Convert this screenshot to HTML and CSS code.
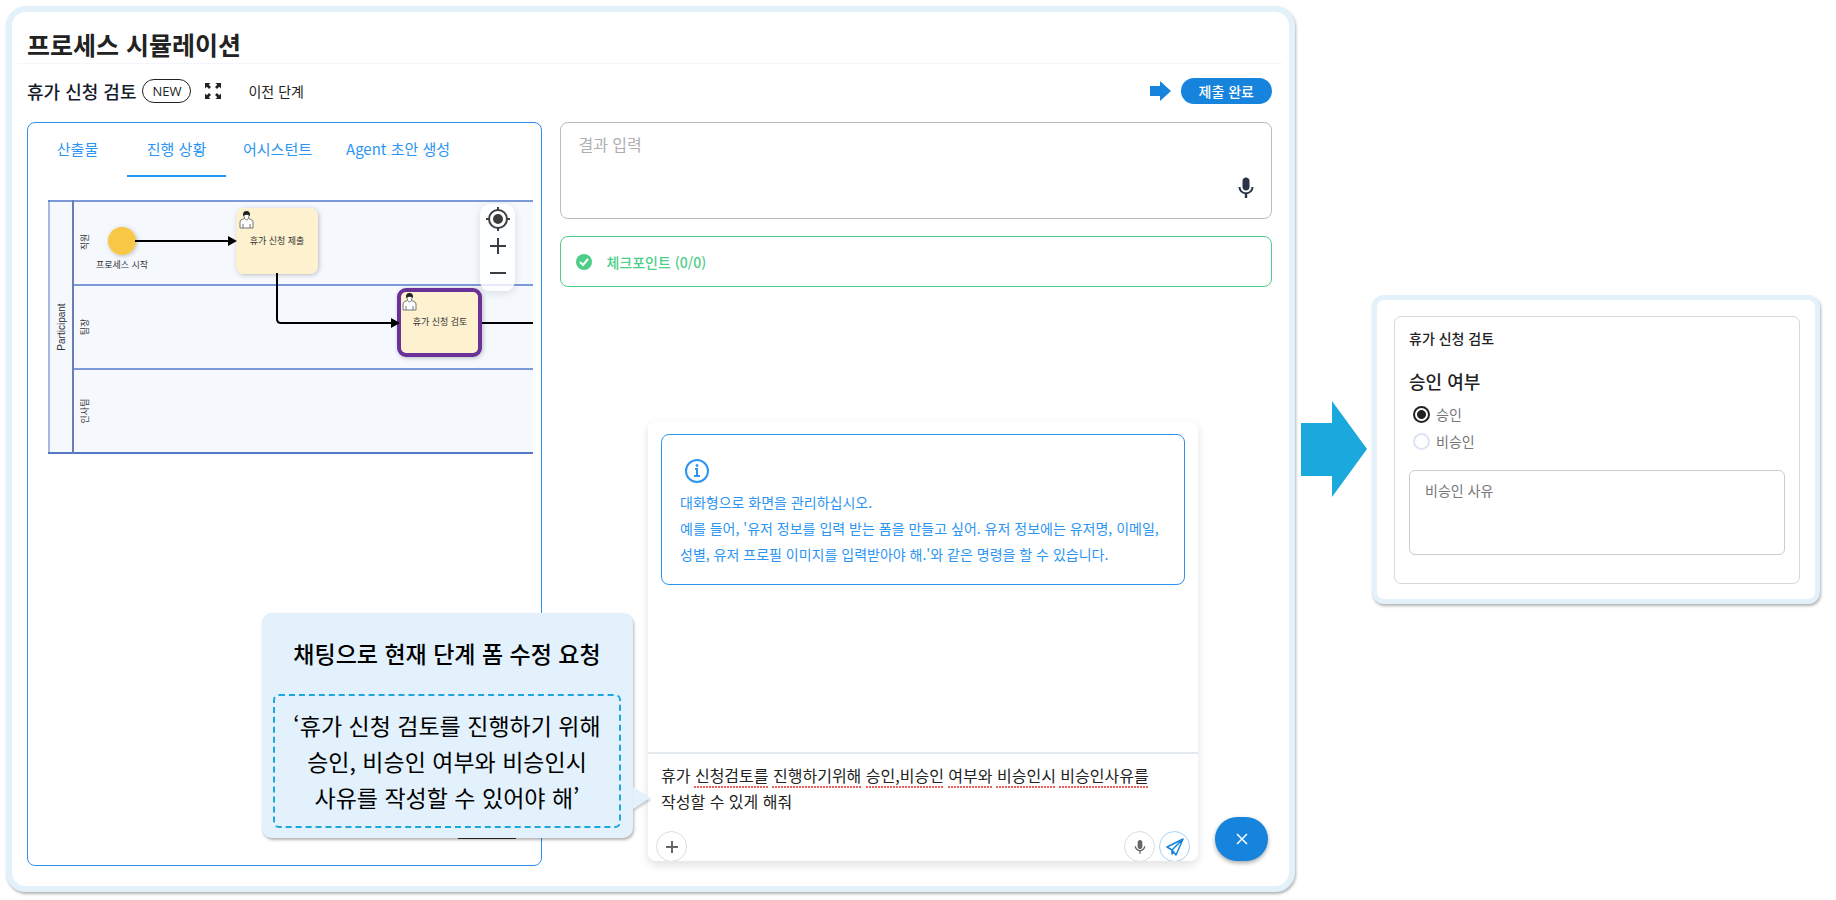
FILE: index.html
```html
<!DOCTYPE html>
<html lang="ko">
<head>
  <meta charset="utf-8">
  <meta name="viewport" content="width=device-width, initial-scale=1.0">
  <title>프로세스 시뮬레이션</title>
  <link rel="stylesheet" href="styles.css">
</head>
<body>
<main class="frame simulation">
  <h1 class="page-title">프로세스 시뮬레이션</h1>

  <header class="task-bar">
    <h2 class="task-name">휴가 신청 검토</h2>
    <span class="chip">NEW</span>
    <button type="button" class="icon-btn expand-btn" aria-label="전체 화면">
      <svg width="18" height="18" viewBox="0 0 18 18">
        <g fill="#222">
          <path d="M1 1h5.500L4.700 2.800 7 5 5 7 2.800 4.700 1 6.500z"/>
          <path d="M17 1v5.500l-1.800-1.800L13 7l-2-2 2.300-2.200L11.500 1z"/>
          <path d="M1 17v-5.500l1.800 1.800L5 11l2 2-2.300 2.200L6.500 17z"/>
          <path d="M17 17h-5.500l1.800-1.800L11 13l2-2 2.200 2.300 1.800-1.800z"/>
        </g>
      </svg>
    </button>
    <button type="button" class="text-btn">이전 단계</button>
    <svg class="hint-arrow" width="21" height="20" viewBox="0 0 21 20"><path d="M0 5h10V0l11 10-11 10v-5H0z" fill="#1683dc"/></svg>
    <button type="button" class="submit-btn">제출 완료</button>
  </header>

  <div class="columns">
    <section class="panel">
      <nav class="tabs">
        <a href="#output">산출물</a>
        <a href="#progress" class="active">진행 상황</a>
        <a href="#assistant">어시스턴트</a>
        <a href="#draft">Agent 초안 생성</a>
      </nav>
      <div class="diagram">
        <svg class="bpmn" width="100%" height="256">
          <defs>
            <filter id="soft" x="-20%" y="-20%" width="140%" height="150%">
              <feDropShadow dx="1" dy="1" stdDeviation="2" flood-color="#000" flood-opacity="0.25"/>
            </filter>
            <g id="user-icon">
              <path d="M1 17v-6q0-2 2-2.500L5.500 7.500h4L12 8.500q2 .5 2 2.500v6z" fill="#fff" stroke="#777" stroke-width="1"/>
              <path d="M4 17v-4M11 17v-4" stroke="#777" stroke-width="1"/>
              <path d="M5 3.500q0 5 2.500 5.500Q10 8.500 10 3.500z" fill="#fff" stroke="#777" stroke-width="1"/>
              <path d="M4 5q-.5-5 3.500-5T11 5Q9 3 7.500 3.500 5 4 4 5z" fill="#222"/>
            </g>
          </defs>
          <!-- pool and lanes -->
          <rect x="0" y="0" width="100%" height="254" fill="#f5f9fe"/>
          <g stroke="#7d9ad8" stroke-width="2">
            <line x1="0" y1="1" x2="100%" y2="1"/>
            <line x1="25" y1="85" x2="100%" y2="85"/>
            <line x1="25" y1="169" x2="100%" y2="169"/>
          </g>
          <g stroke="#5478c6">
            <line x1="0" y1="253" x2="100%" y2="253" stroke-width="2"/>
            <line x1="1" y1="0" x2="1" y2="254" stroke-width="1"/>
            <line x1="25" y1="0" x2="25" y2="254" stroke-width="2" stroke="#6b7eb3"/>
          </g>
          <!-- flows -->
          <g fill="none" stroke="#000" stroke-width="2">
            <path d="M88 41h94"/>
            <path d="M229 74v45q0 4 4 4h112"/>
            <line x1="434" y1="123" x2="100%" y2="123"/>
          </g>
          <!-- nodes -->
          <circle cx="74" cy="41" r="14" fill="#f7c744" filter="url(#soft)"/>
          <path d="M87 41h8" stroke="#000" stroke-width="2"/>
          <rect x="188" y="8" width="82" height="66" rx="8" fill="#fdf1d0" filter="url(#soft)"/>
          <path d="M229 73v6" stroke="#000" stroke-width="2"/>
          <rect x="351" y="90" width="81" height="65" rx="7" fill="#fdf1d0" stroke="#6a3199" stroke-width="4" filter="url(#soft)"/>
          <path d="M180 36l9 5-9 5zM343 118l9 5-9 5z"/>
          <use href="#user-icon" x="191" y="11"/>
          <use href="#user-icon" x="354" y="93"/>
          <g class="node-text">
            <text x="229" y="44">휴가 신청 제출</text>
            <text x="392" y="125">휴가 신청 검토</text>
            <text x="74" y="68">프로세스 시작</text>
            <text class="participant" transform="translate(17 127) rotate(-90)">Participant</text>
            <text transform="translate(40 42) rotate(-90)">직원</text>
            <text transform="translate(40 127) rotate(-90)">팀장</text>
            <text transform="translate(40 211) rotate(-90)">인사팀</text>
          </g>
        </svg>
        <div class="zoom-tools">
          <button type="button" class="icon-btn" aria-label="가운데 맞춤">
            <svg width="26" height="26" viewBox="0 0 26 26" fill="none" stroke="#3d3d3d" stroke-width="2">
              <circle cx="13" cy="13" r="9"/><circle cx="13" cy="13" r="4" fill="#3d3d3d"/>
              <path d="M13 1v4M13 21v4M1 13h4M21 13h4"/>
            </svg>
          </button>
          <button type="button" class="icon-btn" aria-label="확대">
            <svg width="26" height="26" viewBox="0 0 26 26" stroke="#3d3d3d" stroke-width="2"><path d="M13 5v16M5 13h16"/></svg>
          </button>
          <button type="button" class="icon-btn" aria-label="축소">
            <svg width="26" height="26" viewBox="0 0 26 26" stroke="#3d3d3d" stroke-width="2"><path d="M5 13h16"/></svg>
          </button>
        </div>
      </div>
    </section>

    <section class="work">
      <div class="result-box">
        <textarea class="result-input" aria-label="결과 입력" placeholder="결과 입력"></textarea>
        <button type="button" class="icon-btn" aria-label="음성 입력">
          <svg width="24" height="24" viewBox="0 0 24 24" fill="#2a3547"><path d="M12 14.500c2 0 3.500-1.500 3.500-3.500V5C15.500 3 14 1.500 12 1.500S8.500 3 8.500 5v6c0 2 1.500 3.500 3.500 3.500zm5.500-3.500c0 3-2.500 5.300-5.500 5.300S6.500 14 6.500 11h-2c0 3.600 2.800 6.500 6.300 7.100V22h2.400v-3.900c3.500-.6 6.300-3.500 6.300-7.100h-2z"/></svg>
        </button>
      </div>
      <div class="checkpoint">
        <svg width="16" height="16" viewBox="0 0 16 16"><circle cx="8" cy="8" r="8" fill="#4cce88"/><path d="M4 8l3 3 5-6" fill="none" stroke="#fff" stroke-width="2"/></svg>
        <span>체크포인트 (0/0)</span>
      </div>
    </section>
  </div>

  <section class="chat">
    <div class="alert">
      <svg width="24" height="24" viewBox="0 0 24 24" fill="none" stroke="#2c95f2" stroke-width="2">
        <circle cx="12" cy="12" r="11"/>
        <path d="M10 10h2v7M9 17h6"/><circle cx="12" cy="6.500" r="1" fill="#2c95f2" stroke-width="1"/>
      </svg>
      <p>대화형으로 화면을 관리하십시오.<br>예를 들어, '유저 정보를 입력 받는 폼을 만들고 싶어. 유저 정보에는 유저명, 이메일,<br>성별, 유저 프로필 이미지를 입력받아야 해.'와 같은 명령을 할 수 있습니다.</p>
    </div>
    <form class="composer">
      <textarea class="message" aria-label="메시지" rows="2" spellcheck="false">휴가 신청검토를 진행하기위해 승인,비승인 여부와 비승인시 비승인사유를
작성할 수 있게 해줘</textarea>
      <svg class="spelling" width="100%" height="2">
        <path d="M33 1h75M111 1h90M205 1h78M287 1h44M335 1h59M398 1h89" stroke="#f0605c" stroke-width="2" stroke-dasharray="2 1"/>
      </svg>
      <div class="composer-tools">
        <button type="button" class="round-btn" aria-label="추가">
          <svg width="16" height="16" viewBox="0 0 16 16" stroke="#666" stroke-width="2"><path d="M8 2v12M2 8h12"/></svg>
        </button>
        <button type="button" class="round-btn mic-btn" aria-label="음성 입력">
          <svg width="16" height="16" viewBox="0 0 24 24" fill="#666"><path d="M12 15c2 0 3.500-1.500 3.500-3.500V5C15.500 3 14 1.500 12 1.500S8.500 3 8.500 5v6.500C8.500 13.500 10 15 12 15zm6-4c0 3-2.700 5.600-6 5.600S6 14 6 11H4c0 3.700 3 7 7 7.500V22h2v-3.500c4-.5 7-3.800 7-7.500h-2z"/></svg>
        </button>
        <button type="submit" class="round-btn send-btn" aria-label="보내기">
          <svg width="18" height="18" viewBox="0 0 18 18" fill="none" stroke="#1683dc" stroke-width="1.500" stroke-linejoin="round"><path d="M17 1L1 9l5 3 4 5zM17 1L6 12v4l2-2"/></svg>
        </button>
      </div>
    </form>
  </section>
  <button type="button" class="fab" aria-label="닫기">
    <svg width="12" height="12" viewBox="0 0 12 12" stroke="#fff" stroke-width="1.500"><path d="M1 1l10 10M11 1L1 11"/></svg>
  </button>

  <aside class="callout">
    <h3>채팅으로 현재 단계 폼 수정 요청</h3>
    <p>‘휴가 신청 검토를 진행하기 위해<br>승인, 비승인 여부와 비승인시<br>사유를 작성할 수 있어야 해’</p>
    <svg class="callout-tail" width="17" height="22" viewBox="0 0 17 22"><path d="M0 0l17 11L0 22z" fill="#e2f1fb"/></svg>
    <span class="callout-line"></span>
  </aside>
</main>

<svg class="flow-arrow" width="66" height="96" viewBox="0 0 66 96"><path d="M0 22h31V0l35 48-35 48V75H0z" fill="#1ba8dd"/></svg>

<section class="frame result">
  <form class="form-card">
    <h2>휴가 신청 검토</h2>
    <fieldset>
      <legend>승인 여부</legend>
      <label><input type="radio" name="approval" value="yes" checked>승인</label>
      <label><input type="radio" name="approval" value="no">비승인</label>
    </fieldset>
    <textarea class="reason" aria-label="비승인 사유" placeholder="비승인 사유"></textarea>
  </form>
</section>
</body>
</html>
```

FILE: styles.css
```css
* { box-sizing: border-box; }
body { display: grid; grid-template-columns: 1289fr 77px 448fr; align-items: center; margin: 0; padding: 6px 16px 8px 6px; min-height: 100vh; background: #fff; color: #222; font-family: "Noto Sans CJK KR", "Noto Sans", sans-serif; font-size: 14px; }
h1, h2, h3, p { margin: 0; }
button, textarea { font-family: inherit; font-size: 14px; }
button { cursor: pointer; padding: 0; border: none; background: none; }
textarea { display: block; resize: none; outline: none; background: none; }
svg { display: block; flex: none; }

.frame { min-width: 0; background: #fff; border: 6px solid #e3f1fb; box-shadow: 1px 2px 3px rgba(0, 0, 0, 0.3); }

/* simulation */
.simulation { position: relative; align-self: stretch; display: flex; flex-direction: column; padding: 14px 17px 20px 15px; border-radius: 20px; }
.page-title { margin: 0 -10px; padding: 0 10px 1px; border-bottom: 1px solid #f5f6fd; font-size: 25px; line-height: 36px; font-weight: 700; }
.task-bar { display: flex; align-items: center; height: 26px; margin: 14px 0 18px; }
.task-name { font-size: 18px; line-height: 26px; font-weight: 500; color: #141b2b; }
.chip { margin-left: 6px; padding: 0 9px; height: 24px; border: 1px solid #222; border-radius: 12px; font-family: "Open Sans", sans-serif; font-size: 13px; line-height: 22px; }
.expand-btn { margin-left: 13px; }
.text-btn { margin-left: 26px; color: #222; }
.hint-arrow { margin-left: auto; }
.submit-btn { margin-left: 10px; padding: 0 18px; height: 26px; border-radius: 13px; background: #1683dc; color: #fff; font-weight: 500; }
.columns { flex: 1; display: grid; grid-template-columns: 515fr 711fr; gap: 18px; }

.panel { min-width: 0; border: 1px solid #2e90ea; border-radius: 8px; }
.tabs { display: flex; padding-top: 4px; }
.tabs a { flex: none; min-width: 99px; height: 50px; padding: 0 17px; text-align: center; font-size: 15px; line-height: 44px; color: #2c95f2; text-decoration: none; border-bottom: 2px solid transparent; }
.tabs a.active { border-bottom-color: #2196f3; }
.diagram { position: relative; margin: 23px 8px 0 20px; }
.node-text { fill: #333; font-size: 9px; text-anchor: middle; }
.node-text .participant { font-family: "Liberation Sans", sans-serif; font-size: 10px; }
.zoom-tools { position: absolute; top: 4px; right: 18px; display: flex; flex-direction: column; align-items: center; width: 35px; height: 87px; padding: 2px 0; gap: 1px; border-radius: 10px; background: rgba(255, 255, 255, 0.8); box-shadow: 0 2px 8px rgba(0, 0, 0, 0.12); }

.result-box { position: relative; height: 97px; border: 1px solid #bcbcbc; border-radius: 8px; }
.result-input { width: 100%; height: 95px; padding: 9px 17px; border: none; font-size: 16px; line-height: 24px; }
.result-input::placeholder { color: #aeaeb2; }
.result-box .icon-btn { position: absolute; right: 13px; bottom: 18px; }
.checkpoint { display: flex; align-items: center; gap: 14px; height: 51px; margin-top: 17px; padding: 0 15px; border: 1px solid #4cce88; border-radius: 8px; color: #4cce88; font-size: 14px; font-weight: 500; }

/* chat */
.chat { position: absolute; right: 91px; bottom: 25px; width: 550px; height: 440px; display: flex; flex-direction: column; border-radius: 8px; overflow: hidden; background: #fff; box-shadow: 0 4px 10px rgba(0, 0, 0, 0.12); }
.alert { margin: 13px 13px 0; padding: 24px 18px 17px; border: 1px solid #2c95f2; border-radius: 8px; color: #2c95f2; }
.alert svg { margin: 0 0 6px 5px; }
.alert p { line-height: 26px; white-space: nowrap; }
.composer { position: relative; margin-top: auto; border-top: 2px solid #e3e9ef; }
.message { width: 100%; height: 77px; padding: 8px 10px 8px 13px; border: none; color: #222; font-size: 16px; line-height: 26px; }
.spelling { position: absolute; left: 13px; top: 32px; }
.composer-tools { display: flex; gap: 4px; height: 30px; padding: 0 8px; }
.round-btn { flex: none; display: flex; align-items: center; justify-content: center; width: 31px; height: 31px; border: 1px solid #dcdcdc; border-radius: 50%; }
.mic-btn { margin-left: auto; }
.send-btn { border-color: #a9cff5; }
.fab { position: absolute; right: 21px; bottom: 25px; width: 53px; height: 44px; display: flex; align-items: center; justify-content: center; border-radius: 22px; background: #1683dc; box-shadow: 0 2px 4px rgba(0, 0, 0, 0.35); }

.callout { position: absolute; left: 250px; bottom: 48px; width: 371px; height: 225px; padding: 22px 12px 11px 11px; border-radius: 10px; background: #e2f1fb; box-shadow: 1px 2px 3px rgba(0, 0, 0, 0.3); color: #000; text-align: center; }
.callout h3 { font-size: 23px; line-height: 36px; font-weight: 500; white-space: nowrap; }
.callout p { margin-top: 23px; padding: 11px 0; border: 2px dashed #1ca8dd; border-radius: 6px; font-size: 23px; line-height: 36px; white-space: nowrap; }
.callout-tail { position: absolute; left: 100%; bottom: 29px; filter: drop-shadow(1px 2px 1px rgba(0, 0, 0, 0.2)); }
.callout-line { position: absolute; left: 196px; top: 100%; width: 58px; height: 1px; background: #222; }

.flow-arrow { justify-self: center; }

/* generated form */
.result { padding: 16px 15px 15px 17px; border-width: 5px; border-radius: 12px; }
.form-card { height: 268px; padding: 8px 14px; border: 1px solid #d8d8d8; border-radius: 7px; }
.form-card h2 { font-size: 14px; line-height: 26px; font-weight: 500; }
fieldset { margin: 17px 0 0; padding: 0; border: none; }
legend { padding: 0 0 7px; font-size: 18px; line-height: 26px; font-weight: 500; }
fieldset label { display: flex; align-items: center; gap: 6px; height: 27px; padding-left: 4px; color: #777; }
fieldset input { appearance: none; width: 17px; height: 17px; margin: 0; border: 2px solid #dce4f2; border-radius: 50%; }
fieldset input:checked { border-color: #222; background: radial-gradient(#222 4px, #fff 5px); }
.reason { width: 100%; height: 85px; margin-top: 15px; padding: 6px 15px; border: 1px solid #ccc; border-radius: 6px; line-height: 26px; }
.reason::placeholder { color: #777; }
```
